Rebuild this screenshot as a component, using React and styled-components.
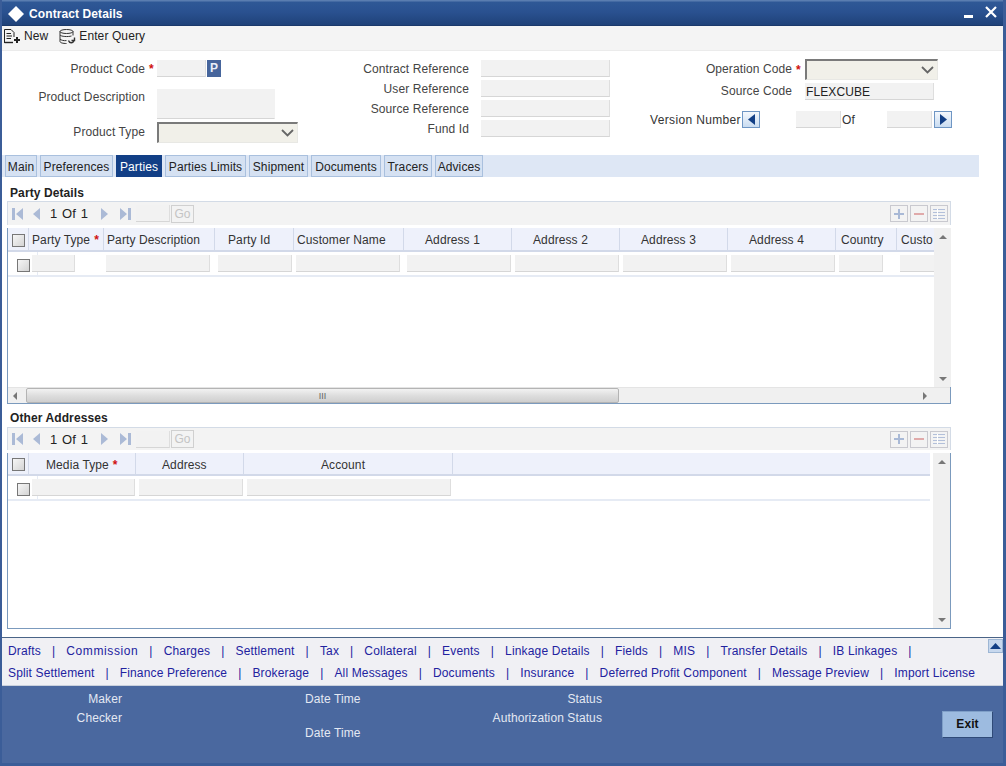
import React from 'react'
import styled, { createGlobalStyle } from 'styled-components'

const GlobalStyle = createGlobalStyle`
  html, body {
    margin: 0;
    padding: 0;
    background: #fff;
  }
  body {
    font-family: "Liberation Sans", Arial, sans-serif;
    font-size: 12px;
    letter-spacing: 0.1px;
    color: #333;
  }
`

const Win = styled.div`
  width: 1006px;
  height: 766px;
  box-sizing: border-box;
  border-left: 2px solid #3b5d98;
  border-right: 3px solid #3b5d98;
  border-bottom: 3px solid #3b5d98;
  display: flex;
  flex-direction: column;
  overflow: hidden;
  background: #fff;
`
const TitleBar = styled.div`
  height: 26px;
  flex: none;
  margin: 0 -3px 0 -2px;
  box-sizing: border-box;
  padding: 2px 9px 0 7px;
  display: flex;
  align-items: center;
  background: linear-gradient(#5a7db0 0, #5a7db0 1px, #2f5896 2px, #2a5190 12px, #1f4279 25px, #16305c 26px);
  color: #fff;
  font-weight: bold;
  font-size: 12px;
`
const TitleText = styled.span`
  margin-left: 4px;
  flex: 1;
`
const TitleBtn = styled.svg`
  display: block;
  margin-left: ${p => p.$gap || 0}px;
  margin-bottom: ${p => p.$mb || 0}px;
  margin-top: ${p => p.$mt || 0}px;
`
const Toolbar = styled.div`
  height: 25px;
  flex: none;
  box-sizing: border-box;
  background: #f4f4f4;
  border-bottom: 1px solid #ebebeb;
  display: flex;
  align-items: center;
  padding: 0 0 4px 2px;
  color: #222;
`
const ToolBtn = styled.div`
  display: flex;
  align-items: center;
  gap: 2px;
  margin-right: ${p => p.$gap || 0}px;
`

const Form = styled.div`
  height: 104px;
  flex: none;
  display: flex;
`
const FormCol = styled.div`
  width: ${p => p.$w}px;
  flex: none;
  padding-top: ${p => p.$top}px;
  box-sizing: border-box;
  display: flex;
  flex-direction: column;
  gap: ${p => p.$gap || 0}px;
`
const Field = styled.div`
  display: flex;
  align-items: ${p => (p.$top ? 'flex-start' : 'center')};
  margin-top: ${p => p.$mt || 0}px;
`
const Label = styled.label`
  width: ${p => p.$w}px;
  height: 17px;
  flex: none;
  text-align: right;
  color: #444;
  line-height: ${p => p.$lh || 17}px;
`
const Star = styled.span`
  width: ${p => p.$w}px;
  flex: none;
  padding-left: 4px;
  box-sizing: border-box;
  color: #d01010;
  font-weight: bold;
`
const TextBox = styled.div`
  width: ${p => p.$w}px;
  height: ${p => p.$h || 17}px;
  margin-left: ${p => p.$ml || 0}px;
  flex: none;
  box-sizing: border-box;
  background: #f2f2f2;
  border-bottom: 1px solid #d6d6d6;
  border-right: 1px solid ${p => (p.$noRight ? '#f2f2f2' : '#dedede')};
  color: #222;
  line-height: 18px;
  padding-left: 1px;
`
const SelectBox = styled.div`
  width: ${p => p.$w}px;
  height: 21px;
  flex: none;
  box-sizing: border-box;
  background: #f1f0e9;
  border-top: 2px solid #7a7a7a;
  border-left: 2px solid #7a7a7a;
  border-right: 1px solid #e8e8e4;
  border-bottom: 1px solid #e8e8e4;
  display: flex;
  align-items: center;
  justify-content: flex-end;
  padding-right: 3px;
`
const PickBtn = styled.div`
  width: 14px;
  height: 17px;
  margin-left: 1px;
  background: #46659c;
  color: #e8eef8;
  font-weight: bold;
  font-size: 12px;
  line-height: 17px;
  text-align: center;
`
const VersionBtn = styled.div`
  width: 18px;
  height: 17px;
  box-sizing: border-box;
  flex: none;
  margin-left: ${p => p.$ml || 0}px;
  background: linear-gradient(#f4f8fd, #c9dcf1);
  border: 1px solid #6f96c4;
  display: flex;
  align-items: center;
  justify-content: center;
`
const PlainText = styled.span`
  color: #333;
  margin-left: ${p => p.$ml || 0}px;
  width: ${p => p.$w}px;
  letter-spacing: ${p => p.$ls || 0.1}px;
  flex: none;
`

const TabStrip = styled.div`
  height: 22px;
  width: 977px;
  flex: none;
  background: #dee7f5;
  display: flex;
  gap: 3px;
  padding-left: 3px;
  box-sizing: border-box;
`
const Tab = styled.div`
  height: 22px;
  width: ${p => p.$w}px;
  flex: none;
  box-sizing: border-box;
  text-align: center;
  line-height: 22px;
  background: ${p => (p.$active ? '#123f86' : '#d5e1f2')};
  color: ${p => (p.$active ? '#fff' : '#222')};
  border: 1px solid ${p => (p.$active ? '#123f86' : '#a9c0de')};
`

const Section = styled.div`
  margin: 0 0 8px 5px;
  width: 944px;
  flex: none;
`
const Heading = styled.div`
  height: ${p => p.$h}px;
  box-sizing: border-box;
  padding: ${p => p.$pt}px 0 0 3px;
  font-weight: bold;
  color: #222;
  line-height: 14px;
`
const Pager = styled.div`
  height: ${p => p.$h}px;
  box-sizing: border-box;
  background: #f3f3f3;
  border: 1px solid #d3dbe6;
  border-bottom: none;
  display: flex;
  align-items: center;
  padding-left: 3px;
  margin-bottom: 3px;
`
const PageIcon = styled.svg`
  display: block;
  flex: none;
  margin-left: ${p => p.$ml}px;
`
const PageText = styled.span`
  margin-left: 10px;
  width: 40px;
  flex: none;
  font-size: 13px;
  color: #222;
  word-spacing: 1px;
`
const PageInput = styled.div`
  width: 34px;
  height: 17px;
  margin-left: 5px;
  flex: none;
  background: #f2f2f2;
  border-bottom: 1px solid #d6d6d6;
  border-right: 1px solid #dedede;
  box-sizing: border-box;
`
const GoBtn = styled.div`
  width: 23px;
  height: 18px;
  margin-left: 1px;
  flex: none;
  box-sizing: border-box;
  border: 1px solid #d0d0d0;
  color: #c4c4c4;
  text-align: center;
  line-height: 16px;
`
const RowBtns = styled.div`
  margin-left: auto;
  margin-right: 2px;
  display: flex;
  gap: 2px;
`
const RowBtn = styled.div`
  width: 18px;
  height: 17px;
  box-sizing: border-box;
  border: 1px solid #c9c9cf;
  display: flex;
  align-items: center;
  justify-content: center;
`

const TableBox = styled.div`
  height: 176px;
  box-sizing: border-box;
  border: 1px solid #7b9abd;
  border-top: none;
  display: flex;
  flex-direction: column;
  background: #fff;
`
const TableMain = styled.div`
  flex: 1;
  min-height: 0;
  display: flex;
`
const Grid = styled.div`
  width: ${p => p.$w}px;
  flex: none;
  overflow: hidden;
`
const HeadRow = styled.div`
  height: ${p => p.$h}px;
  box-sizing: border-box;
  display: flex;
  background: #eef1fb;
  border-bottom: 2px solid #d2d9e9;
`
const HeadCell = styled.div`
  width: ${p => p.$w}px;
  flex: none;
  box-sizing: border-box;
  border-right: 1px solid #d2d9e9;
  color: #333;
  white-space: nowrap;
  display: flex;
  align-items: center;
  padding: 2px 0 0 ${p => p.$pl}px;
`
const CheckBox = styled.div`
  width: 13px;
  height: 13px;
  margin-top: ${p => p.$mt || 0}px;
  box-sizing: border-box;
  border: 1px solid #777;
  background: linear-gradient(135deg, #f6f6f6, #d4d4d4);
  flex: none;
`
const BodyRow = styled.div`
  height: 25px;
  box-sizing: border-box;
  display: flex;
  align-items: center;
  border-bottom: 2px solid #e6ebf4;
  padding-left: 9px;
  background: linear-gradient(#e6ebf4, #e6ebf4) 29px 0 / 1px 100% no-repeat;
`
const VScroll = styled.div`
  width: 17px;
  flex: none;
  margin-left: auto;
  background: #f0f0f0;
  display: flex;
  flex-direction: column;
  justify-content: space-between;
  align-items: center;
  padding: 7px 0 6px;
  box-sizing: border-box;
`
const HScroll = styled.div`
  height: 16px;
  flex: none;
  background: #f0f0f0;
  border-top: 1px solid #e4e4e4;
  display: flex;
  align-items: center;
  padding: 0 23px 0 5px;
  box-sizing: border-box;
`
const HThumb = styled.div`
  width: 593px;
  height: 15px;
  margin-left: 9px;
  box-sizing: border-box;
  border: 1px solid #b4b4b4;
  border-radius: 2px;
  background: linear-gradient(#f2f2f2, #dedede 50%, #cfcfcf);
  display: flex;
  align-items: center;
  justify-content: center;
  color: #666;
  font-size: 9px;
  letter-spacing: 0;
`
const Spacer = styled.div`
  flex: 1;
`

const LinksBar = styled.div`
  height: 49px;
  flex: none;
  box-sizing: border-box;
  background: #f0f0f4;
  border-top: 1px solid #4a6487;
  border-bottom: 1px solid #c9d0dc;
  position: relative;
  padding: 2px 0 0 6px;
`
const LinkRow = styled.div`
  height: 22px;
  display: flex;
  align-items: center;
  color: #22229f;
  letter-spacing: ${p => p.$ls}px;
  white-space: nowrap;
`
const LinkText = styled.span`
  letter-spacing: ${p => (p.$wide ? '0.6px' : 'inherit')};
`
const LinkSep = styled.span`
  margin: 0 11px;
`
const CollapseBtn = styled.div`
  position: absolute;
  top: 1px;
  right: 0;
  width: 15px;
  height: 14px;
  box-sizing: border-box;
  background: #c7d8ee;
  border: 1px solid #9db6d4;
  display: flex;
  align-items: center;
  justify-content: center;
`
const StatusBar = styled.div`
  flex: 1;
  background: #4a689f;
  display: flex;
  color: #e4e9f3;
  box-sizing: border-box;
`
const StatusCol = styled.div`
  width: ${p => p.$w}px;
  flex: none;
  box-sizing: border-box;
  padding: 6px 0 0 ${p => p.$pl || 0}px;
  text-align: ${p => (p.$pl ? 'left' : 'right')};
  line-height: 14px;
`
const StatusLine = styled.div`
  height: 14px;
  margin-bottom: ${p => p.$mb || 0}px;
`
const ExitBtn = styled.div`
  margin: 25px 10px 0 auto;
  width: 51px;
  height: 27px;
  box-sizing: border-box;
  background: #9dbbe0;
  border: 1px solid #7f9fc8;
  border-right-color: #2f4a78;
  border-bottom-color: #2f4a78;
  color: #111;
  font-weight: bold;
  text-align: center;
  line-height: 25px;
`

const NewIcon = () => (
  <svg width="18" height="15" viewBox="0 0 18 15" fill="none" stroke="#222">
    <path d="M.5 14V.5H7L10 3.5V8" />
    <path d="M.5 13.5H9" strokeWidth="1.4" />
    <path d="M2.5 4.5H7M2.5 7H8M2.5 9.5H7" />
    <path d="M13 8V14M10 11H16" strokeWidth="2" />
  </svg>
)
const QueryIcon = () => (
  <svg width="18" height="15" viewBox="0 0 18 15" fill="none" stroke="#333">
    <ellipse cx="7.5" cy="2.5" rx="6.5" ry="2" />
    <path d="M1 2.5V12.5C1 13.8 4 14.5 7.5 14.5" />
    <path d="M14 2.5V6.5" />
    <path d="M1 6C2 7.6 9 8 12.5 7M1 10C2 11.4 5 11.8 7.5 11.6" />
    <path d="M9.5 11.5C10.5 14.5 14 14.5 15.5 11M15.5 8.5V11.5H12.5" strokeWidth="1.4" />
  </svg>
)
const Chevron = () => (
  <svg width="13" height="8" viewBox="0 0 13 8" fill="none" stroke="#666" strokeWidth="1.8">
    <path d="M1 1L6.5 6.5L12 1" />
  </svg>
)

const ArrowFirst = () => (
  <PageIcon $ml={1} width="11" height="12" viewBox="0 0 11 12" fill="#abbad6">
    <path d="M0 0H3V12H0ZM11 0V12L4 6Z" />
  </PageIcon>
)
const ArrowPrev = () => (
  <PageIcon $ml={10} width="7" height="12" viewBox="0 0 7 12" fill="#abbad6">
    <path d="M7 0V12L0 6Z" />
  </PageIcon>
)
const ArrowNext = () => (
  <PageIcon $ml={11} width="7" height="12" viewBox="0 0 7 12" fill="#abbad6">
    <path d="M0 0V12L7 6Z" />
  </PageIcon>
)
const ArrowLast = () => (
  <PageIcon $ml={12} width="11" height="12" viewBox="0 0 11 12" fill="#abbad6">
    <path d="M0 0V12L7 6ZM8 0H11V12H8Z" />
  </PageIcon>
)
const Tri = ({ dir }) => {
  const d = { up: 'M0 4L4 0L8 4Z', down: 'M0 0L8 0L4 4Z', left: 'M4 0V8L0 4Z', right: 'M0 0V8L4 4Z' }[dir]
  const w = dir === 'up' || dir === 'down' ? 8 : 4
  const h = dir === 'up' || dir === 'down' ? 4 : 8
  return (
    <svg width={w} height={h} viewBox={`0 0 ${w} ${h}`} fill="#777">
      <path d={d} />
    </svg>
  )
}

const PagerBar = ({ h }) => (
  <Pager $h={h}>
    <ArrowFirst />
    <ArrowPrev />
    <PageText>1 Of 1</PageText>
    <ArrowNext />
    <ArrowLast />
    <PageInput />
    <GoBtn>Go</GoBtn>
    <RowBtns>
      <RowBtn>
        <svg width="12" height="12" viewBox="0 0 12 12" fill="#a9b9d6">
          <path d="M5 1H7V5H11V7H7V11H5V7H1V5H5Z" />
        </svg>
      </RowBtn>
      <RowBtn>
        <svg width="12" height="4" viewBox="0 0 12 4" fill="#e0aaaa">
          <path d="M1 1H11V3H1Z" />
        </svg>
      </RowBtn>
      <RowBtn>
        <svg width="14" height="12" viewBox="0 0 14 12" fill="none" stroke="#b3c0da">
          <path d="M1 1.5H13M1 4.5H13M1 7.5H13M1 10.5H13" />
          <path d="M5.5 1V11" stroke="#fff" />
        </svg>
      </RowBtn>
    </RowBtns>
  </Pager>
)

const partyColumns = [
  { label: 'Party Type', w: 75, pl: 3, star: true, ml: 2, iw: 43 },
  { label: 'Party Description', w: 111, pl: 3, ml: 31, iw: 104 },
  { label: 'Party Id', w: 79, pl: 13, ml: 8, iw: 74 },
  { label: 'Customer Name', w: 110, pl: 3, ml: 4, iw: 104 },
  { label: 'Address 1', w: 108, pl: 21, ml: 7, iw: 104 },
  { label: 'Address 2', w: 108, pl: 21, ml: 4, iw: 104 },
  { label: 'Address 3', w: 108, pl: 21, ml: 4, iw: 104 },
  { label: 'Address 4', w: 108, pl: 21, ml: 4, iw: 104 },
  { label: 'Country', w: 61, pl: 5, ml: 4, iw: 44 },
  { label: 'Custo', w: 70, pl: 4, ml: 17, iw: 60 },
]

const addressColumns = [
  { label: 'Media Type', w: 107, pl: 17, star: true, ml: 2, iw: 103 },
  { label: 'Address', w: 108, pl: 26, ml: 4, iw: 104 },
  { label: 'Account', w: 209, pl: 77, ml: 4, iw: 204 },
]

const DataGrid = ({ columns, w, headH }) => (
  <Grid $w={w}>
    <HeadRow $h={headH}>
      <HeadCell $w={21} $pl={4}>
        <CheckBox />
      </HeadCell>
      {columns.map(c => (
        <HeadCell key={c.label} $w={c.w} $pl={c.pl}>
          {c.label}
          {c.star && <Star $w={10}>*</Star>}
        </HeadCell>
      ))}
    </HeadRow>
    <BodyRow>
      <CheckBox $mt={3} />
      {columns.map(c => (
        <TextBox key={c.label} $w={c.iw} $ml={c.ml} />
      ))}
    </BodyRow>
  </Grid>
)

const tabs = [
  ['Main', 32],
  ['Preferences', 73],
  ['Parties', 46],
  ['Parties Limits', 81],
  ['Shipment', 59],
  ['Documents', 70],
  ['Tracers', 48],
  ['Advices', 48],
]

const linkRows = [
  {
    ls: 0.17,
    trailing: true,
    items: ['Drafts', 'Commission', 'Charges', 'Settlement', 'Tax', 'Collateral', 'Events', 'Linkage Details', 'Fields', 'MIS', 'Transfer Details', 'IB Linkages'],
  },
  {
    ls: 0.15,
    trailing: false,
    items: ['Split Settlement', 'Finance Preference', 'Brokerage', 'All Messages', 'Documents', 'Insurance', 'Deferred Profit Component', 'Message Preview', 'Import License'],
  },
]

export default function App() {
  return (
    <Win>
      <GlobalStyle />
      <TitleBar>
        <svg width="18" height="18" viewBox="0 0 18 18">
          <path d="M9 1L17 9L9 17L1 9Z" fill="#fff" />
        </svg>
        <TitleText>Contract Details</TitleText>
        <TitleBtn $mt={4} width="9" height="3" viewBox="0 0 9 3">
          <path d="M0 0H9V3H0Z" fill="#fff" />
        </TitleBtn>
        <TitleBtn $gap={12} $mb={5} width="12" height="12" viewBox="0 0 12 12" fill="none" stroke="#fff" strokeWidth="2.2">
          <path d="M1 1L11 11M11 1L1 11" />
        </TitleBtn>
      </TitleBar>

      <Toolbar>
        <ToolBtn $gap={11}>
          <NewIcon />
          New
        </ToolBtn>
        <ToolBtn>
          <QueryIcon />
          Enter Query
        </ToolBtn>
      </Toolbar>

      <Form>
        <FormCol $w={296} $top={9}>
          <Field>
            <Label $w={143} $lh={19}>Product Code</Label>
            <Star $w={12}>*</Star>
            <TextBox $w={49} />
            <PickBtn>P</PickBtn>
          </Field>
          <Field $top $mt={12}>
            <Label $w={143}>Product Description</Label>
            <TextBox $w={118} $h={30} $ml={12} $noRight />
          </Field>
          <Field $mt={3}>
            <Label $w={143}>Product Type</Label>
            <Star $w={12} />
            <SelectBox $w={141}>
              <Chevron />
            </SelectBox>
          </Field>
        </FormCol>
        <FormCol $w={312} $top={9} $gap={3}>
          {['Contract Reference', 'User Reference', 'Source Reference', 'Fund Id'].map(l => (
            <Field key={l}>
              <Label $w={171} $lh={19}>{l}</Label>
              <TextBox $w={129} $ml={12} />
            </Field>
          ))}
        </FormCol>
        <FormCol $w={342} $top={8}>
          <Field>
            <Label $w={182}>Operation Code</Label>
            <Star $w={13}>*</Star>
            <SelectBox $w={133}>
              <Chevron />
            </SelectBox>
          </Field>
          <Field $mt={3}>
            <Label $w={182}>Source Code</Label>
            <TextBox $w={129} $ml={13}>FLEXCUBE</TextBox>
          </Field>
          <Field $mt={11}>
            <PlainText $ml={40} $w={92} $ls={0.35}>Version Number</PlainText>
            <VersionBtn>
              <svg width="7" height="11" viewBox="0 0 7 11"><path d="M7 0V11L0 5.5Z" fill="#123f86" /></svg>
            </VersionBtn>
            <TextBox $w={45} $ml={36} />
            <PlainText $ml={1} $w={45}>Of</PlainText>
            <TextBox $w={45} />
            <VersionBtn $ml={2}>
              <svg width="7" height="11" viewBox="0 0 7 11"><path d="M0 0V11L7 5.5Z" fill="#123f86" /></svg>
            </VersionBtn>
          </Field>
        </FormCol>
      </Form>

      <TabStrip>
        {tabs.map(([name, w]) => (
          <Tab key={name} $w={w} $active={name === 'Parties'}>{name}</Tab>
        ))}
      </TabStrip>

      <Section>
        <Heading $h={24} $pt={9}>Party Details</Heading>
        <PagerBar h={24} />
        <TableBox>
          <TableMain>
            <DataGrid columns={partyColumns} w={926} headH={24} />
            <VScroll>
              <Tri dir="up" />
              <Tri dir="down" />
            </VScroll>
          </TableMain>
          <HScroll>
            <Tri dir="left" />
            <HThumb>III</HThumb>
            <Spacer />
            <Tri dir="right" />
          </HScroll>
        </TableBox>

        <Heading $h={23} $pt={7}>Other Addresses</Heading>
        <PagerBar h={23} />
        <TableBox>
          <TableMain>
            <DataGrid columns={addressColumns} w={922} headH={23} />
            <VScroll>
              <Tri dir="up" />
              <Tri dir="down" />
            </VScroll>
          </TableMain>
        </TableBox>
      </Section>

      <LinksBar>
        {linkRows.map(({ ls, trailing, items }) => (
          <LinkRow key={items[0]} $ls={ls}>
            {items.map((item, j) => (
              <React.Fragment key={item}>
                <LinkText $wide={item === 'Commission'}>{item}</LinkText>
                {(j < items.length - 1 || trailing) && <LinkSep>|</LinkSep>}
              </React.Fragment>
            ))}
          </LinkRow>
        ))}
        <CollapseBtn>
          <svg width="11" height="6" viewBox="0 0 11 6"><path d="M0 6L5.5 0L11 6Z" fill="#123f86" /></svg>
        </CollapseBtn>
      </LinksBar>

      <StatusBar>
        <StatusCol $w={120}>
          <StatusLine $mb={5}>Maker</StatusLine>
          <StatusLine>Checker</StatusLine>
        </StatusCol>
        <StatusCol $w={248} $pl={183}>
          <StatusLine $mb={20}>Date Time</StatusLine>
          <StatusLine>Date Time</StatusLine>
        </StatusCol>
        <StatusCol $w={232}>
          <StatusLine $mb={5}>Status</StatusLine>
          <StatusLine>Authorization Status</StatusLine>
        </StatusCol>
        <ExitBtn>Exit</ExitBtn>
      </StatusBar>
    </Win>
  )
}
